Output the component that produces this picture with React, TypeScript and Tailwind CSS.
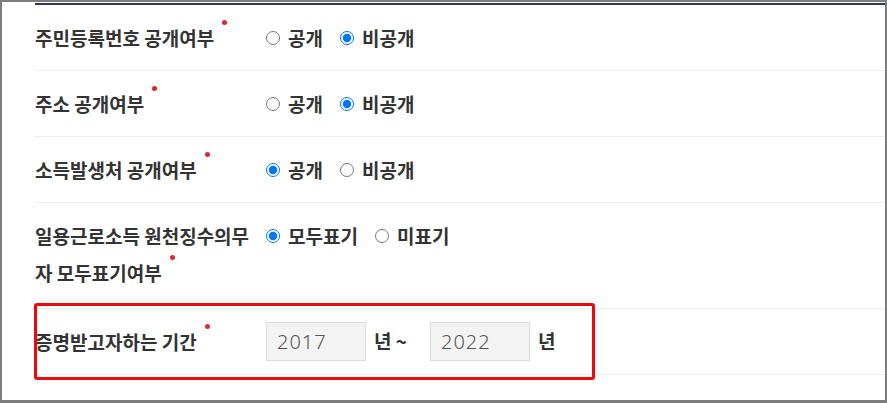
import React, { useState } from 'react';

const FONT = '"Noto Sans CJK KR", "Noto Sans", sans-serif';

function Dot() {
  return <span className="inline-block align-top mt-[1px] ml-[8px] w-[5px] h-[5px] rounded-full bg-[#e1262d]" />;
}

interface RadioGroupProps {
  name: string;
  options: string[];
  value: string;
  onChange: (v: string) => void;
}

function RadioGroup({ name, options, value, onChange }: RadioGroupProps) {
  return (
    <div className="flex items-center gap-[17px]">
      {options.map((opt) => (
        <label key={opt} className="flex items-center gap-[8px] cursor-pointer">
          <input
            type="radio"
            name={name}
            checked={value === opt}
            onChange={() => onChange(opt)}
            className="m-0 w-[14px] h-[14px]"
          />
          <span className="text-[19px] font-bold text-[#333] leading-[37px]">{opt}</span>
        </label>
      ))}
    </div>
  );
}

export default function App() {
  const [ssn, setSsn] = useState('비공개');
  const [addr, setAddr] = useState('비공개');
  const [income, setIncome] = useState('공개');
  const [daily, setDaily] = useState('모두표기');
  const [from, setFrom] = useState('2017');
  const [to, setTo] = useState('2022');

  return (
    <div
      className="w-[887px] h-[403px] bg-white border-2 border-b-[3px] border-[#7d7d7d] pl-[33px] pt-[1px]"
      style={{ fontFamily: FONT }}
    >
      <div className="border-t-2 border-[#2e3a56]">
        {/* 주민등록번호 */}
        <div className="flex items-center h-[66px] border-b border-[#ececec]">
          <div className="w-[231px] text-[19px] font-bold text-[#333] leading-[37px]">
            주민등록번호 공개여부<Dot />
          </div>
          <RadioGroup name="ssn" options={['공개', '비공개']} value={ssn} onChange={setSsn} />
        </div>

        {/* 주소 */}
        <div className="flex items-center h-[66px] border-b border-[#ececec]">
          <div className="w-[231px] text-[19px] font-bold text-[#333] leading-[37px]">
            주소 공개여부<Dot />
          </div>
          <RadioGroup name="addr" options={['공개', '비공개']} value={addr} onChange={setAddr} />
        </div>

        {/* 소득발생처 */}
        <div className="flex items-center h-[66px] border-b border-[#ececec]">
          <div className="w-[231px] text-[19px] font-bold text-[#333] leading-[37px]">
            소득발생처 공개여부<Dot />
          </div>
          <RadioGroup name="income" options={['공개', '비공개']} value={income} onChange={setIncome} />
        </div>

        {/* 일용근로소득 */}
        <div className="flex items-start h-[106px] pt-[14px] border-b border-[#ececec]">
          <div className="w-[231px] pr-[8px] text-[19px] font-bold text-[#333] leading-[37px]">
            일용근로소득 원천징수의무자 모두표기여부<Dot />
          </div>
          <RadioGroup name="daily" options={['모두표기', '미표기']} value={daily} onChange={setDaily} />
        </div>

        {/* 기간 */}
        <div className="relative flex items-center h-[66px] border-b border-[#ececec]">
          <div className="w-[231px] text-[19px] font-bold text-[#333] leading-[37px]">
            증명받고자하는 기간<Dot />
          </div>
          <input
            value={from}
            onChange={(e) => setFrom(e.target.value)}
            className="w-[100px] h-[39px] px-[10px] bg-[#f3f3f3] border border-[#dcdcdc] text-[20px] font-light tracking-[1px] text-[#555] outline-none"
            style={{ fontFamily: '"Noto Sans", sans-serif' }}
          />
          <span className="ml-[8px] text-[19px] font-bold text-[#333]">년 ~</span>
          <input
            value={to}
            onChange={(e) => setTo(e.target.value)}
            className="ml-[23px] w-[100px] h-[39px] px-[10px] bg-[#f3f3f3] border border-[#dcdcdc] text-[20px] font-light tracking-[1px] text-[#555] outline-none"
            style={{ fontFamily: '"Noto Sans", sans-serif' }}
          />
          <span className="ml-[8px] text-[19px] font-bold text-[#333]">년</span>
          <div className="absolute left-[-1px] top-[-6px] w-[561px] h-[77px] border-[3.5px] border-[#ee0a0a] rounded-[3px] pointer-events-none" />
        </div>
      </div>
    </div>
  );
}
